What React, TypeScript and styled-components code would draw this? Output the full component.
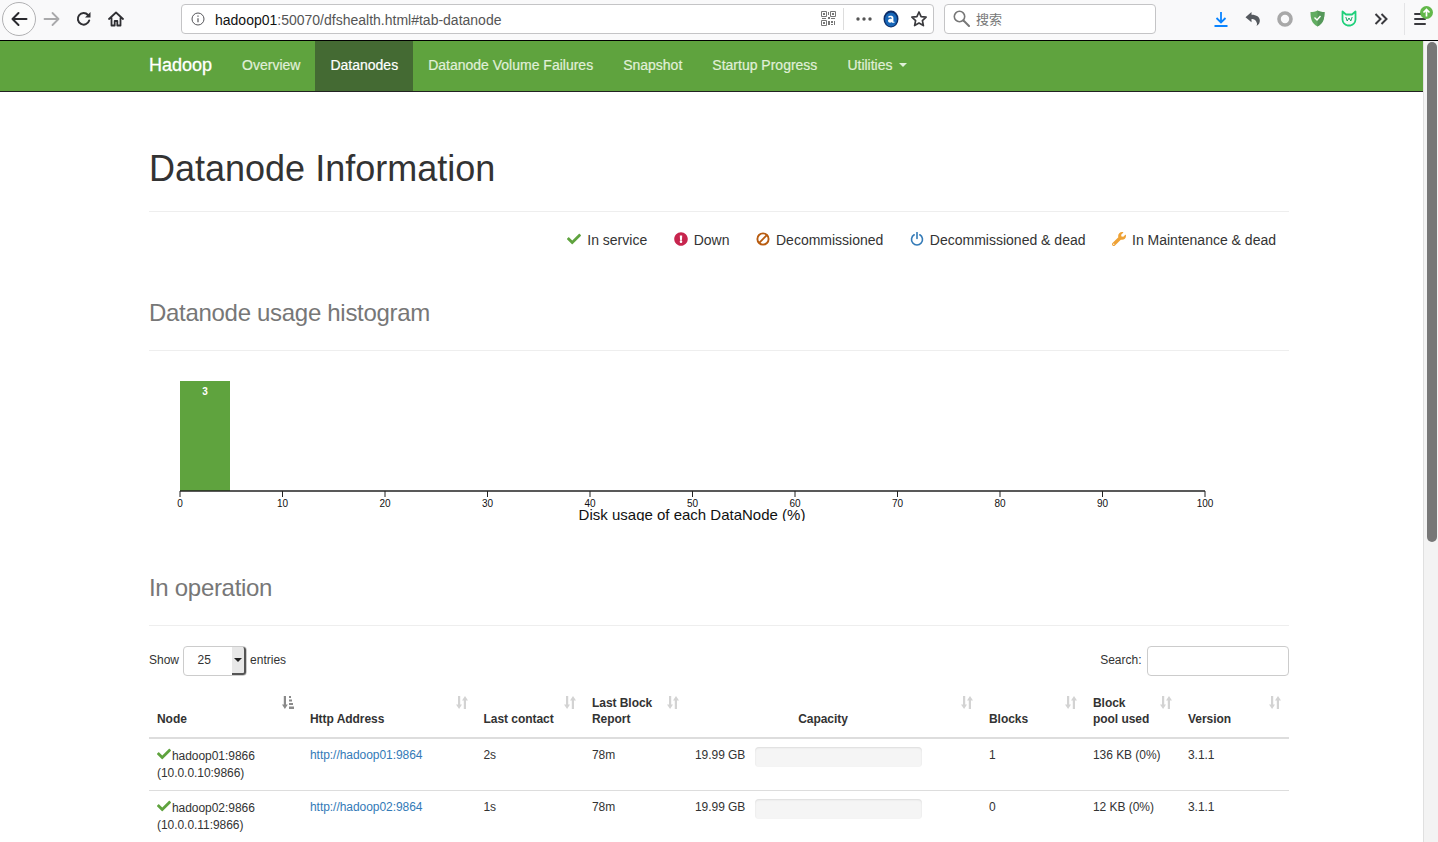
import React from 'react';
import styled, { createGlobalStyle } from 'styled-components';
import { FaCheck, FaExclamationCircle, FaWrench } from 'react-icons/fa';

const GlobalStyle = createGlobalStyle`
  html, body {
    margin: 0;
    height: 100%;
    overflow: hidden;
    background: #fff;
    font-family: "Liberation Sans", Arial, sans-serif;
    color: #333;
  }
  * {
    box-sizing: border-box;
  }
`;

const navItems = ['Overview', 'Datanodes', 'Datanode Volume Failures', 'Snapshot', 'Startup Progress'];

const banIcon = (
  <svg width="14" height="14" viewBox="0 0 14 14" fill="none">
    <circle cx="7" cy="7" r="5.6" stroke="currentColor" strokeWidth="1.9" />
    <path d="M3.2 10.8L10.8 3.2" stroke="currentColor" strokeWidth="1.9" />
  </svg>
);

const powerIcon = (
  <svg width="14" height="14" viewBox="0 0 14 14" fill="none">
    <path d="M4.2 2.8a5.5 5.5 0 1 0 5.6 0" stroke="currentColor" strokeWidth="1.6" strokeLinecap="round" />
    <path d="M7 .5v6" stroke="currentColor" strokeWidth="1.6" strokeLinecap="round" />
  </svg>
);

const legend = [
  { label: 'In service', icon: <FaCheck />, color: '#5fa33e' },
  { label: 'Down', icon: <FaExclamationCircle />, color: '#c7254e' },
  { label: 'Decommissioned', icon: banIcon, color: '#b85c10' },
  { label: 'Decommissioned & dead', icon: powerIcon, color: '#337ab7' },
  { label: 'In Maintenance & dead', icon: <FaWrench />, color: '#eea236' },
];

const columns = [
  { label: ['Node'], width: 153, sorted: true },
  { label: ['Http Address'], width: 173.5 },
  { label: ['Last contact'], width: 108.5 },
  { label: ['Last Block', 'Report'], width: 103 },
  { label: ['Capacity'], width: 294, center: true },
  { label: ['Blocks'], width: 104 },
  { label: ['Block', 'pool used'], width: 95 },
  { label: ['Version'], width: 109 },
];

const nodes = [
  { name: 'hadoop01:9866', ip: '(10.0.0.10:9866)', url: 'http://hadoop01:9864', contact: '2s', report: '78m', capacity: '19.99 GB', blocks: '1', pool: '136 KB (0%)', version: '3.1.1' },
  { name: 'hadoop02:9866', ip: '(10.0.0.11:9866)', url: 'http://hadoop02:9864', contact: '1s', report: '78m', capacity: '19.99 GB', blocks: '0', pool: '12 KB (0%)', version: '3.1.1' },
];

const ticks = [0, 10, 20, 30, 40, 50, 60, 70, 80, 90, 100];

const App: React.FC = () => {
  return (
    <Window>
      <GlobalStyle />
      <Toolbar>
        <BackButton>{backArrow}</BackButton>
        <ToolButton>{forwardArrow}</ToolButton>
        <ToolButton>{reloadIcon}</ToolButton>
        <ToolButton>{homeIcon}</ToolButton>
        <UrlBar>
          {infoIcon}
          <UrlText>
            hadoop01<UrlRest>:50070/dfshealth.html#tab-datanode</UrlRest>
          </UrlText>
          <UrlActions>
            {qrIcon}
            <UrlDivider />
            {dotsIcon}
            {alexaIcon}
            {starIcon}
          </UrlActions>
        </UrlBar>
        <SearchBar>
          {searchIcon}
          <SearchText>搜索</SearchText>
        </SearchBar>
        <ExtensionButton>{downloadIcon}</ExtensionButton>
        <UndoButton>{undoIcon}</UndoButton>
        <ToolButton>{ringIcon}</ToolButton>
        <ToolButton>{shieldIcon}</ToolButton>
        <ToolButton>{wIcon}</ToolButton>
        <ToolButton>{chevronsIcon}</ToolButton>
        <ToolbarDivider />
        <MenuButton>
          {menuIcon}
          <UpdateBadge>{updateArrow}</UpdateBadge>
        </MenuButton>
      </Toolbar>

      <Viewport>
        <Page>
          <Navbar>
            <Brand>Hadoop</Brand>
            {navItems.map((item) => (
              <NavLink key={item} $active={item === 'Datanodes'}>
                {item}
              </NavLink>
            ))}
            <NavLink>
              Utilities
              <Caret />
            </NavLink>
          </Navbar>

          <Container>
            <PageTitle>Datanode Information</PageTitle>
            <Legend>
              {legend.map((item) => (
                <LegendItem key={item.label}>
                  <LegendIcon $color={item.color}>{item.icon}</LegendIcon>
                  {item.label}
                </LegendItem>
              ))}
            </Legend>

            <SectionTitle>Datanode usage histogram</SectionTitle>
            <Chart viewBox="0 0 1140 142" width="1140" height="142">
              <rect x="31" y="2" width="50" height="110" fill="#5fa33e" />
              <text x="56" y="16" fill="#fff" fontSize="10" fontWeight="700" textAnchor="middle">
                3
              </text>
              <line x1="31" y1="112" x2="1056" y2="112" stroke="#222" strokeWidth="1.4" />
              {ticks.map((tick) => {
                const x = 31 + tick * 10.25;
                return (
                  <g key={tick}>
                    <line x1={x} y1="112" x2={x} y2="118" stroke="#222" strokeWidth="1" />
                    <text x={x} y="128" fontSize="10" fill="#111" textAnchor="middle">
                      {tick}
                    </text>
                  </g>
                );
              })}
              <text x="543" y="141" fontSize="15" fill="#111" textAnchor="middle">
                Disk usage of each DataNode (%)
              </text>
            </Chart>

            <SectionTitle $spaced>In operation</SectionTitle>

            <TableControls>
              <ControlGroup>
                <ControlLabel>Show</ControlLabel>
                <SelectBox>
                  <ControlLabel>25</ControlLabel>
                  <SelectArrow>
                    <Caret $dark />
                  </SelectArrow>
                </SelectBox>
                <ControlLabel>entries</ControlLabel>
              </ControlGroup>
              <ControlGroup>
                <ControlLabel>Search:</ControlLabel>
                <SearchInput />
              </ControlGroup>
            </TableControls>

            <NodeTable>
              <colgroup>
                {columns.map((column) => (
                  <col key={column.label.join(' ')} width={column.width} />
                ))}
              </colgroup>
              <thead>
                <tr>
                  {columns.map((column) => (
                    <HeaderCell key={column.label.join(' ')} $center={column.center}>
                      {column.label.map((line) => (
                        <div key={line}>{line}</div>
                      ))}
                      <SortIcon>{column.sorted ? sortedIcon : sortIcon}</SortIcon>
                    </HeaderCell>
                  ))}
                </tr>
              </thead>
              <tbody>
                {nodes.map((node) => (
                  <tr key={node.name}>
                    <Cell>
                      <NodeCheck>
                        <FaCheck />
                      </NodeCheck>
                      {node.name}
                      <br />
                      {node.ip}
                    </Cell>
                    <Cell>
                      <NodeLink>{node.url}</NodeLink>
                    </Cell>
                    <Cell>{node.contact}</Cell>
                    <Cell>{node.report}</Cell>
                    <Cell>
                      <CapacityRow>
                        {node.capacity}
                        <ProgressTrack />
                      </CapacityRow>
                    </Cell>
                    <Cell>{node.blocks}</Cell>
                    <Cell>{node.pool}</Cell>
                    <Cell>{node.version}</Cell>
                  </tr>
                ))}
              </tbody>
            </NodeTable>
          </Container>
        </Page>
        <Scrollbar>
          <ScrollThumb />
        </Scrollbar>
      </Viewport>
    </Window>
  );
};

export default App;

const Window = styled.div`
  width: 1438px;
  height: 842px;
  display: flex;
  flex-direction: column;
  overflow: hidden;
`;

const Toolbar = styled.div`
  height: 41px;
  flex-shrink: 0;
  display: flex;
  align-items: center;
  padding: 0 2px 3px 2px;
  background: #f9f9fa;
  border-bottom: 1px solid #000;
`;

const ToolButton = styled.div`
  width: 32px;
  height: 32px;
  flex-shrink: 0;
  display: flex;
  align-items: center;
  justify-content: center;
`;

const BackButton = styled(ToolButton)`
  width: 34px;
  height: 34px;
  border: 1px solid #b1b1b3;
  border-radius: 50%;
  background: #fcfcfc;
`;

const ExtensionButton = styled(ToolButton)`
  margin-left: 49px;
`;

const UndoButton = styled(ToolButton)`
  padding-right: 2px;
`;

const UrlBar = styled.div`
  width: 753px;
  height: 30px;
  margin-left: 49px;
  padding: 0 5px 0 9px;
  display: flex;
  align-items: center;
  background: #fff;
  border: 1px solid #c4c4c6;
  border-radius: 4px;
`;

const UrlText = styled.div`
  margin-left: 10px;
  padding-top: 2px;
  font-size: 14px;
  color: #111;
`;

const UrlRest = styled.span`
  color: #555;
`;

const UrlActions = styled.div`
  margin-left: auto;
  display: flex;
  align-items: center;
  gap: 11px;
`;

const UrlDivider = styled.div`
  width: 1px;
  height: 22px;
  margin: 0 1px 0 -4px;
  background: #ddd;
`;

const SearchBar = styled.div`
  width: 212px;
  height: 30px;
  margin-left: 10px;
  padding-left: 8px;
  display: flex;
  align-items: center;
  gap: 6px;
  background: #fff;
  border: 1px solid #c4c4c6;
  border-radius: 4px;
`;

const SearchText = styled.div`
  font-family: "Noto Sans CJK SC", sans-serif;
  font-size: 13px;
  color: #777;
`;

const ToolbarDivider = styled.div`
  width: 1px;
  height: 32px;
  margin-left: 7px;
  background: #e4e4e6;
`;

const MenuButton = styled.div`
  position: relative;
  width: 31px;
  height: 32px;
  padding-right: 2px;
  display: flex;
  align-items: center;
  justify-content: center;
`;

const UpdateBadge = styled.div`
  position: absolute;
  top: 3px;
  right: 3px;
  display: flex;
`;

const Viewport = styled.div`
  flex: 1;
  min-height: 0;
  display: flex;
`;

const Page = styled.div`
  flex: 1;
  min-width: 0;
  overflow: hidden;
`;

const Navbar = styled.nav`
  height: 51px;
  padding-left: 134px;
  display: flex;
  background: #5fa33e;
  border-bottom: 1px solid #222;
`;

const Brand = styled.div`
  padding: 0 15px 1px;
  display: flex;
  align-items: center;
  font-size: 18px;
  color: #fff;
  -webkit-text-stroke: 0.3px #fff;
`;

const NavLink = styled.div<{ $active?: boolean }>`
  padding: 0 15px 2px;
  display: flex;
  align-items: center;
  font-size: 14px;
  color: ${({ $active }) => ($active ? '#fff' : '#e0f0d9')};
  background: ${({ $active }) => ($active ? '#446a33' : 'transparent')};
  -webkit-text-stroke: 0.2px ${({ $active }) => ($active ? '#fff' : '#e0f0d9')};
`;

const Caret = styled.span<{ $dark?: boolean }>`
  display: inline-block;
  width: 0;
  height: 0;
  margin-left: ${({ $dark }) => ($dark ? '0' : '6px')};
  border-top: 4px solid ${({ $dark }) => ($dark ? '#222' : '#e0f0d9')};
  border-left: 4px solid transparent;
  border-right: 4px solid transparent;
`;

const Container = styled.main`
  width: 1140px;
  margin-left: 149px;
`;

const PageTitle = styled.h1`
  margin: 0;
  padding: 57px 0 22px;
  font-size: 36px;
  font-weight: 400;
  line-height: 40px;
  border-bottom: 1px solid #eee;
`;

const Legend = styled.div`
  height: 57px;
  padding: 0 13px 2px 0;
  display: flex;
  justify-content: flex-end;
  align-items: center;
  gap: 26.5px;
`;

const LegendItem = styled.div`
  display: flex;
  align-items: center;
  font-size: 14px;
`;

const LegendIcon = styled.span<{ $color: string }>`
  width: 20px;
  margin-top: -2px;
  display: flex;
  font-size: 14px;
  color: ${({ $color }) => $color};
`;

const SectionTitle = styled.h2<{ $spaced?: boolean }>`
  margin: ${({ $spaced }) => ($spaced ? '54px' : '31px')} 0 0;
  padding-bottom: 24px;
  font-size: 24px;
  font-weight: 400;
  line-height: 26px;
  letter-spacing: -0.3px;
  color: #777;
  border-bottom: 1px solid #eee;
`;

const Chart = styled.svg`
  display: block;
  margin-top: 28px;
`;

const TableControls = styled.div`
  margin-top: 20px;
  display: flex;
  justify-content: space-between;
  font-size: 12px;
`;

const ControlGroup = styled.div`
  display: flex;
  align-items: center;
  gap: 3.5px;
`;

const ControlLabel = styled.span`
  margin-bottom: 2px;
`;

const SelectBox = styled.div`
  position: relative;
  width: 64px;
  height: 30px;
  padding-left: 14px;
  display: flex;
  align-items: center;
  background: #fff;
  border: 1px solid #ccc;
  border-radius: 4px;
`;

const SelectArrow = styled.div`
  position: absolute;
  top: 0;
  right: 0;
  bottom: 0;
  width: 14px;
  display: flex;
  align-items: center;
  justify-content: center;
  background: #e8e8e8;
  border-right: 2px solid #555;
  border-bottom: 2px solid #555;
  border-radius: 0 3px 3px 0;
`;

const SearchInput = styled.div`
  width: 142px;
  height: 30px;
  margin-left: 2px;
  background: #fff;
  border: 1px solid #ccc;
  border-radius: 4px;
`;

const NodeTable = styled.table`
  width: 1140px;
  margin-top: 12px;
  table-layout: fixed;
  border-collapse: collapse;
  font-size: 12px;
  line-height: 17.14px;
  letter-spacing: -0.05px;
`;

const HeaderCell = styled.th<{ $center?: boolean }>`
  position: relative;
  padding: 7px 30px 10px 8px;
  vertical-align: bottom;
  line-height: 16px;
  white-space: nowrap;
  text-align: ${({ $center }) => ($center ? 'center' : 'left')};
  border-bottom: 2px solid #ddd;
`;

const SortIcon = styled.span`
  position: absolute;
  top: 8px;
  right: 8px;
  display: flex;
`;

const Cell = styled.td`
  height: 51px;
  padding: 8px;
  vertical-align: top;
  border-bottom: 1px solid #ddd;
`;

const NodeCheck = styled.span`
  font-size: 14px;
  color: #5fa33e;
  vertical-align: -1px;
  margin-right: 1px;
`;

const NodeLink = styled.span`
  color: #337ab7;
`;

const CapacityRow = styled.div`
  display: flex;
  gap: 10px;
`;

const ProgressTrack = styled.div`
  width: 167px;
  height: 20px;
  background: #f5f5f5;
  border-radius: 4px;
  box-shadow: inset 0 1px 2px rgba(0, 0, 0, 0.1);
`;

const Scrollbar = styled.div`
  width: 15px;
  flex-shrink: 0;
  padding: 1px 1px 0 3px;
  background: #f3f3f3;
  border-left: 1px solid #e0e0e0;
`;

const ScrollThumb = styled.div`
  height: 500px;
  background: #777;
  border-radius: 6px;
`;

const backArrow = (
  <svg width="18" height="18" viewBox="0 0 18 18" fill="none">
    <path d="M16.5 9H2.5M8.5 3L2.5 9l6 6" stroke="#2a2a2e" strokeWidth="2" strokeLinecap="round" strokeLinejoin="round" />
  </svg>
);

const forwardArrow = (
  <svg width="18" height="18" viewBox="0 0 18 18" fill="none">
    <path d="M1.5 9h14M9.5 3l6 6-6 6" stroke="#a9a9ab" strokeWidth="1.8" strokeLinecap="round" strokeLinejoin="round" />
  </svg>
);

const reloadIcon = (
  <svg width="16" height="16" viewBox="0 0 16 16" fill="none">
    <path d="M13.2 9.5A5.8 5.8 0 1 1 12 4" stroke="#2f2f33" strokeWidth="2" strokeLinecap="round" />
    <path d="M14.5 1v5.5H9z" fill="#2f2f33" />
  </svg>
);

const homeIcon = (
  <svg width="16" height="16" viewBox="0 0 16 16" fill="none">
    <path d="M1 8l7-6.5L15 8M3.5 7v7.5h3.2V10h2.6v4.5h3.2V7" stroke="#2f2f33" strokeWidth="1.8" strokeLinejoin="round" strokeLinecap="round" />
  </svg>
);

const infoIcon = (
  <svg width="14" height="14" viewBox="0 0 14 14" fill="none">
    <circle cx="7" cy="7" r="6" stroke="#55555a" strokeWidth="1" />
    <path d="M7 6.2v4M7 3.6v1.2" stroke="#55555a" strokeWidth="1.2" />
  </svg>
);

const qrIcon = (
  <svg width="15" height="15" viewBox="0 0 15 15" fill="none">
    <path d="M.5.5h5v5h-5zM9.5.5h5v5h-5zM.5 9.5h5v5h-5z" stroke="#777" />
    <path d="M2 2h2v2H2zM11 2h2v2h-2zM2 11h2v2H2zM7 1h1v3H7zM7 6h2v2H7zM1 7h4v1H1zM10 7h4v1h-4zM7 10h2v4H7zM10 10h2v2h-2zM13 10h1v4h-1zM10 13h2v1h-2z" fill="#777" />
  </svg>
);

const dotsIcon = (
  <svg width="16" height="4" viewBox="0 0 16 4" fill="#555">
    <circle cx="2" cy="2" r="1.7" />
    <circle cx="8" cy="2" r="1.7" />
    <circle cx="14" cy="2" r="1.7" />
  </svg>
);

const alexaIcon = (
  <svg width="16" height="18" viewBox="0 0 16 18">
    <ellipse cx="8" cy="9" rx="7.5" ry="8.5" fill="#0d2c66" />
    <ellipse cx="8" cy="9.5" rx="6" ry="7" fill="#1766b8" />
    <path d="M5 7C5.6 5.4 10.4 5 10.4 7.8v4h1.1v1H8.9v-.8C7.6 13.2 5 12.8 5 10.8 5 8.8 7.2 8.4 8.9 8.8 8.9 6.8 6.6 6.8 5.9 7.8z" fill="#fff" />
  </svg>
);

const starIcon = (
  <svg width="18" height="18" viewBox="0 0 18 18" fill="none">
    <path d="M9 2l2.1 4.6 5 .6-3.7 3.4 1 5L9 13.1l-4.4 2.5 1-5L1.9 7.2l5-.6z" stroke="#3a3a3e" strokeWidth="1.7" strokeLinejoin="round" />
  </svg>
);

const searchIcon = (
  <svg width="17" height="17" viewBox="0 0 17 17" fill="none">
    <circle cx="6.5" cy="6.5" r="5.2" stroke="#777" strokeWidth="1.6" />
    <path d="M10.5 10.5L16 16" stroke="#777" strokeWidth="2" strokeLinecap="round" />
  </svg>
);

const downloadIcon = (
  <svg width="14" height="16" viewBox="0 0 14 16" fill="none">
    <path d="M7 1v10M2.5 7L7 11.5 11.5 7M.5 15h13" stroke="#0a84ff" strokeWidth="1.8" />
  </svg>
);

const undoIcon = (
  <svg width="15" height="15" viewBox="0 0 15 15" fill="#55595e">
    <path d="M6.5 1L.5 6.2l6 5V8c2.8 0 4.5 1 5.5 4.500 0 1 0 1.500-.5 2.500 2.500-1.500 3.500-3.500 3.300-6-.3-2.800-3-5.200-8.300-5.200z" />
  </svg>
);

const ringIcon = (
  <svg width="16" height="16" viewBox="0 0 16 16" fill="none">
    <circle cx="8" cy="8" r="6" stroke="#a8a8a8" strokeWidth="3.6" />
  </svg>
);

const shieldIcon = (
  <svg width="15" height="17" viewBox="0 0 15 17">
    <path d="M7.5.5c2 1 4.500 1.500 7 1.500 0 6-1 11.500-7 14.500C1.500 13.500.5 8 .5 2c2.500 0 5-.5 7-1.500z" fill="#62ad62" />
    <path d="M7.5.5c2 1 4.500 1.500 7 1.500 0 6-1 11.500-7 14.500z" fill="#56985a" />
    <path d="M4.500 7.500L7 10l3.500-4" stroke="#fff" strokeWidth="1.4" fill="none" />
  </svg>
);

const wIcon = (
  <svg width="16" height="17" viewBox="0 0 16 17" fill="none">
    <path d="M1.500 1.500l3.500 3h6l3.500-3v8c0 2.800-2.500 5.300-5 6H6.500c-2.500-.7-5-3.200-5-6z" stroke="#1fd07a" strokeWidth="1.8" strokeLinejoin="round" />
    <path d="M4.800 7l1.400 4L8 8l1.800 3 1.400-4" stroke="#1aa566" strokeWidth="1" />
  </svg>
);

const chevronsIcon = (
  <svg width="14" height="12" viewBox="0 0 14 12" fill="none">
    <path d="M1.500 1l5 5-5 5M7.500 1l5 5-5 5" stroke="#3a3a3e" strokeWidth="2" />
  </svg>
);

const menuIcon = (
  <svg width="12" height="12" viewBox="0 0 12 12" fill="#3a3a3e">
    <rect width="12" height="2" y="0" rx="1" />
    <rect width="12" height="2" y="5" rx="1" />
    <rect width="12" height="2" y="10" rx="1" />
  </svg>
);

const updateArrow = (
  <svg width="13" height="13" viewBox="0 0 13 13">
    <circle cx="6.5" cy="6.5" r="6.5" fill="#62b84a" />
    <path d="M6.5 10.500V3.500M3.500 6.500l3-3 3 3" stroke="#fff" strokeWidth="1.7" fill="none" />
  </svg>
);

const sortIcon = (
  <svg width="12" height="13" viewBox="0 0 12 13" fill="#d3d3d3">
    <path d="M2 0h2.200v8.500H6L3.100 13 0 8.500h2zM7.800 13H10V4.500h2L9 0 6 4.500h1.800z" />
  </svg>
);

const sortedIcon = (
  <svg width="12" height="13" viewBox="0 0 12 13" fill="#8a8a8a">
    <path d="M1.800 0H4v8.500h1.800L2.900 13 0 8.500h1.800zM7 0h2v2H7zM7 3.500h3v2H7zM7 7h4v2H7zM7 10.500h5V13H7z" />
  </svg>
);
